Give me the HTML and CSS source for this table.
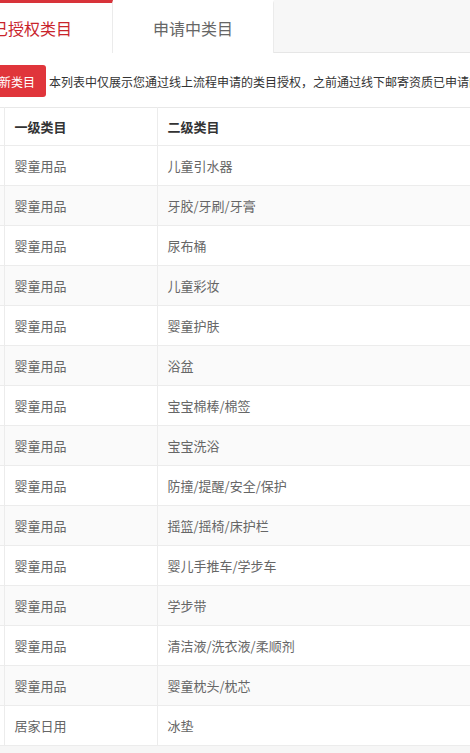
FILE: index.html
```html
<!DOCTYPE html>
<html lang="zh-CN">
<head>
<meta charset="utf-8">
<link rel="stylesheet" href="styles.css">
</head>
<body>
<div class="page">
  <div class="tabs">
    <div class="tab active">已授权类目</div>
    <div class="tab">申请中类目</div>
    <div class="tab-rest"></div>
  </div>
  <div class="panel">
    <div class="toolbar">
      <button class="btn">添加新类目</button>
      <span class="note">本列表中仅展示您通过线上流程申请的类目授权，之前通过线下邮寄资质已申请的类目不在此列表中展示</span>
    </div>
    <table class="grid">
      <thead>
        <tr><th class="c0"></th><th class="c1">一级类目</th><th class="c2">二级类目</th></tr>
      </thead>
      <tbody>
        <tr><td class="c0"></td><td>婴童用品</td><td>儿童引水器</td></tr>
        <tr><td class="c0"></td><td>婴童用品</td><td>牙胶/牙刷/牙膏</td></tr>
        <tr><td class="c0"></td><td>婴童用品</td><td>尿布桶</td></tr>
        <tr><td class="c0"></td><td>婴童用品</td><td>儿童彩妆</td></tr>
        <tr><td class="c0"></td><td>婴童用品</td><td>婴童护肤</td></tr>
        <tr><td class="c0"></td><td>婴童用品</td><td>浴盆</td></tr>
        <tr><td class="c0"></td><td>婴童用品</td><td>宝宝棉棒/棉签</td></tr>
        <tr><td class="c0"></td><td>婴童用品</td><td>宝宝洗浴</td></tr>
        <tr><td class="c0"></td><td>婴童用品</td><td>防撞/提醒/安全/保护</td></tr>
        <tr><td class="c0"></td><td>婴童用品</td><td>摇篮/摇椅/床护栏</td></tr>
        <tr><td class="c0"></td><td>婴童用品</td><td>婴儿手推车/学步车</td></tr>
        <tr><td class="c0"></td><td>婴童用品</td><td>学步带</td></tr>
        <tr><td class="c0"></td><td>婴童用品</td><td>清洁液/洗衣液/柔顺剂</td></tr>
        <tr><td class="c0"></td><td>婴童用品</td><td>婴童枕头/枕芯</td></tr>
        <tr><td class="c0"></td><td>居家日用</td><td>冰垫</td></tr>
      </tbody>
    </table>
  </div>
</div>
</body>
</html>
```
FILE: styles.css
```css
html, body {
  margin: 0;
  padding: 0;
  background: #f6f6f6;
  overflow: hidden;
}
body {
  font-family: "Noto Sans CJK SC", "Microsoft YaHei", sans-serif;
  color: #333;
}
.page {
  margin-left: -48px;
  width: 760px;
}
.tabs {
  display: flex;
  height: 53px;
  border-bottom: 1px solid #e6e6e6;
  box-sizing: border-box;
  background: #f7f7f7;
}
.tab {
  width: 161px;
  box-sizing: border-box;
  background: #fff;
  border-right: 1px solid #ebebeb;
  border-top: 3px solid transparent;
  display: flex;
  align-items: center;
  justify-content: center;
  font-size: 16px;
  color: #666;
  height: 53px;
}
.tab.active {
  border-top-color: #d8333a;
  color: #c9242b;
}
.tab-rest {
  flex: 1;
}
.panel {
  background: #fff;
  padding: 12px 0 0 12px;
}
.toolbar {
  display: flex;
  align-items: center;
  gap: 3px;
  height: 32px;
  margin-bottom: 10px;
  white-space: nowrap;
}
.btn {
  height: 32px;
  padding: 0 11px;
  border: none;
  border-radius: 3px;
  background: #e0353b;
  color: #fff;
  font-family: inherit;
  font-size: 12px;
}
.note {
  font-size: 12px;
  color: #333;
}
.grid {
  border-collapse: collapse;
  width: 748px;
  font-size: 13px;
  border-top: 1px solid #e8e8e8;
  border-bottom: 1px solid #e8e8e8;
}
.grid th, .grid td {
  height: 40px;
  padding: 0 10px;
  text-align: left;
  border-bottom: 1px solid #ececec;
  border-left: 1px solid #ececec;
  box-sizing: border-box;
}
.grid th {
  font-weight: bold;
  color: #333;
  height: 38px;
}
.grid td {
  color: #666;
}
.grid .c0 {
  width: 40px;
  border-left: none;
  padding: 0;
}
.grid .c1 {
  width: 153px;
}
.grid tbody tr:nth-child(even) td {
  background: #fafafa;
}
```
